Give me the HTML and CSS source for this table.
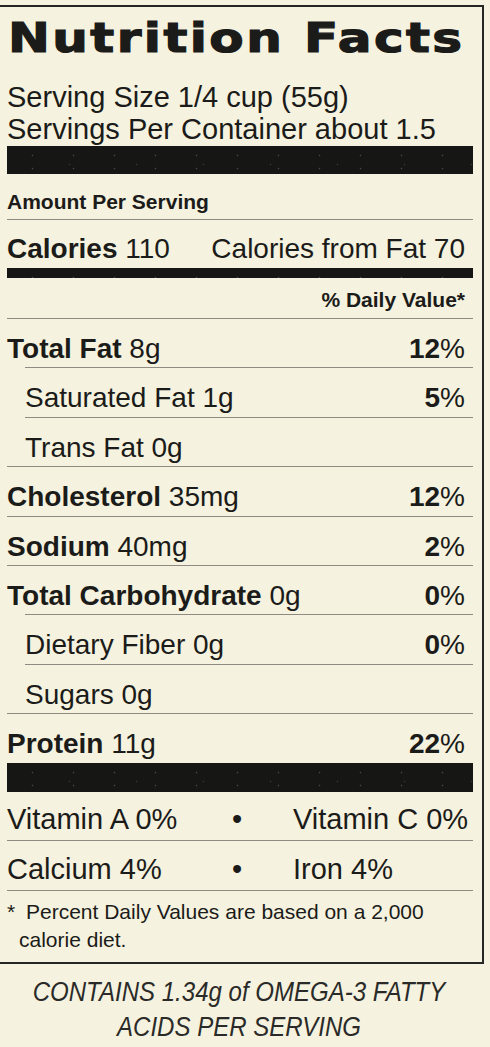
FILE: index.html
```html
<!DOCTYPE html>
<html lang="en">
<head>
  <meta charset="UTF-8" />
  <meta name="viewport" content="width=device-width, initial-scale=1.0"/>
  <title>Nutrition Facts</title>
  <link rel="stylesheet" href="styles.css">
</head>
<body>

  <div class="page">

    <!-- Label box -->
    <section class="label">
      <h1 class="title">Nutrition Facts</h1>
      <div class="serving">
        <p>Serving Size 1/4 cup (55g)</p>
        <p>Servings Per Container about 1.5</p>
      </div>

      <div class="bar bar-thick"></div>
      <p class="amount">Amount Per Serving</p>
      <div class="calories">
        <span><b>Calories</b> 110</span>
        <span>Calories from Fat 70</span>
      </div>
      <div class="bar bar-mid"></div>
      <p class="dv-head">% Daily Value*</p>

      <div class="row"><span><b>Total Fat</b> 8g</span><span><b>12</b>%</span></div>
      <div class="row sub"><span>Saturated Fat 1g</span><span><b>5</b>%</span></div>
      <div class="row sub"><span>Trans Fat 0g</span></div>
      <div class="row"><span><b>Cholesterol</b> 35mg</span><span><b>12</b>%</span></div>
      <div class="row"><span><b>Sodium</b> 40mg</span><span><b>2</b>%</span></div>
      <div class="row"><span><b>Total Carbohydrate</b> 0g</span><span><b>0</b>%</span></div>
      <div class="row sub"><span>Dietary Fiber 0g</span><span><b>0</b>%</span></div>
      <div class="row sub"><span>Sugars 0g</span></div>
      <div class="row"><span><b>Protein</b> 11g</span><span><b>22</b>%</span></div>

      <div class="bar bar-bottom"></div>
      <div class="vit-row"><span>Vitamin A 0%</span><span class="dot">•</span><span>Vitamin C 0%</span></div>
      <div class="vit-row"><span>Calcium 4%</span><span class="dot">•</span><span>Iron 4%</span></div>

      <p class="note"><span class="star">*</span>Percent Daily Values are based on a 2,000 calorie diet.</p>
    </section>

    <p class="omega">CONTAINS 1.34g of OMEGA-3 FATTY<br>ACIDS PER SERVING</p>

  </div>

</body>
</html>
```

FILE: styles.css
```css
body {
  margin: 0;
  background: #f5f2df;
  color: #1b1b19;
  font-family: "Liberation Sans", Arial, sans-serif;
}

p {
  margin: 0;
}

.page {
  width: 484px;
  padding-top: 5px;
}

/* left edge of the box is cropped off in the photo */
.label {
  border: 2px solid #262624;
  border-left: none;
  padding: 0 9px 0 7px;
}

.title {
  width: fit-content;
  margin: 8.5px 0 0 1px;
  font-family: "DejaVu Sans", sans-serif;
  font-weight: 700;
  font-size: 41px;
  line-height: 44px;
  letter-spacing: 2px;
  white-space: nowrap;
  transform: scaleX(1.22);
  transform-origin: left;
  -webkit-text-stroke: 1.2px #1b1b19;
}

.serving {
  margin-top: 21.5px;
  font-size: 29px;
  line-height: 32px;
}

.bar {
  background-color: #161614;
  background-image:
    radial-gradient(circle, rgba(255,255,255,0.22) 0.6px, transparent 1.1px),
    radial-gradient(circle, rgba(255,255,255,0.14) 0.6px, transparent 1.1px);
  background-size: 41px 13px, 67px 19px;
  background-position: 5px 3px, 29px 9px;
}

.bar-thick {
  height: 28px;
  margin-top: 1px;
}

.bar-mid {
  height: 10px;
}

.bar-bottom {
  height: 29px;
}

.amount {
  padding: 16px 0 5px;
  font-size: 21px;
  line-height: 24px;
  font-weight: 700;
  border-bottom: 1px solid #8e8c82;
}

.calories {
  display: flex;
  justify-content: space-between;
  padding: 13px 8px 3px 0;
  font-size: 28px;
  line-height: 32px;
}

.dv-head {
  padding: 9.5px 8px 6.5px 0;
  text-align: right;
  font-size: 21px;
  line-height: 24px;
  font-weight: 700;
}

.row {
  display: flex;
  justify-content: space-between;
  box-sizing: border-box;
  height: 49.4px;
  padding: 14px 8px 0 0;
  border-top: 1px solid #8e8c82;
  font-size: 28px;
  line-height: 32px;
}

.row.sub {
  margin-left: 18px;
}

.vit-row {
  display: grid;
  grid-template-columns: 174px 112px 1fr;
  padding: 11.5px 0 5px;
  font-size: 29px;
  line-height: 32px;
  border-bottom: 1px solid #8e8c82;
}

.dot {
  text-align: center;
}

.note {
  padding: 7.75px 0 7.25px 12px;
  text-indent: -12px;
  font-size: 21px;
  line-height: 28px;
}

.star {
  display: inline-block;
  width: 19px;
  text-indent: 0;
}

.omega {
  width: 478px;
  margin-top: 11.5px;
  text-align: center;
  font-style: italic;
  font-size: 27px;
  line-height: 35px;
  color: #2a2a28;
  transform: scaleX(0.89);
}
```
